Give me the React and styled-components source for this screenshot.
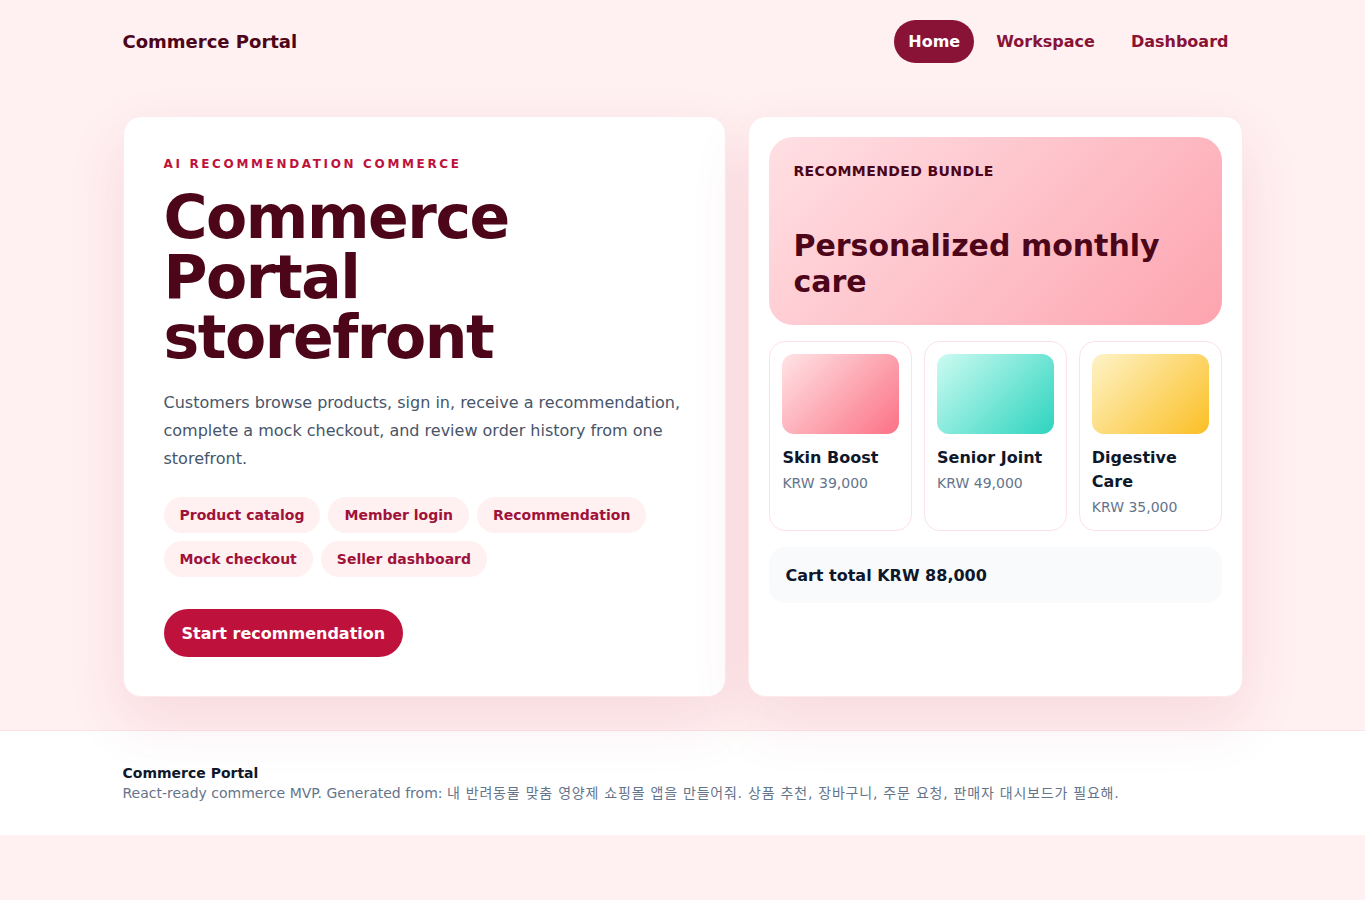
import styled, { createGlobalStyle } from 'styled-components';

const GlobalStyle = createGlobalStyle`
  body {
    margin: 0;
    background: #fff0f1;
    font-family: "DejaVu Sans", "Noto Sans CJK KR", sans-serif;
    color: #0f172a;
  }
  * {
    box-sizing: border-box;
  }
`;

const Container = styled.div`
  max-width: 1120px;
  margin: 0 auto;
`;

const Header = styled(Container)`
  display: flex;
  align-items: center;
  justify-content: space-between;
  padding: 20px 0;
`;

const Brand = styled.div`
  font-size: 18px;
  font-weight: 700;
  color: #4c0519;
`;

const Nav = styled.nav`
  display: flex;
  gap: 8px;
`;

const NavLink = styled.a`
  padding: 10px 14px;
  border-radius: 999px;
  font-size: 16px;
  font-weight: 700;
  line-height: 23px;
  text-decoration: none;
  color: ${(p) => (p.$active ? '#ffffff' : '#881337')};
  background: ${(p) => (p.$active ? '#881337' : 'transparent')};
`;

const Main = styled(Container)`
  display: grid;
  grid-template-columns: 1.1fr 0.9fr;
  gap: 22px;
  padding: 33px 0 33px;
`;

const Card = styled.section`
  background: #ffffff;
  border: 1px solid #fdeaed;
  border-radius: 18px;
  box-shadow: 0 24px 60px rgba(190, 18, 60, 0.1);
  padding: ${(p) => p.$pad};
`;

const Eyebrow = styled.div`
  font-size: 12px;
  font-weight: 700;
  letter-spacing: 2.65px;
  color: #be123c;
  line-height: 14px;
`;

const Title = styled.h1`
  margin: 16px 0 0;
  font-size: 60px;
  line-height: 60px;
  font-weight: 700;
  letter-spacing: -0.024em;
  color: #4c0519;
`;

const Lead = styled.p`
  margin: 22px 0 0;
  font-size: 16px;
  line-height: 28px;
  color: #475569;
`;

const Chips = styled.div`
  display: flex;
  flex-wrap: wrap;
  gap: 8px;
  margin-top: 24px;
`;

const Chip = styled.span`
  padding: 0 16px;
  height: 36px;
  display: inline-flex;
  align-items: center;
  border-radius: 999px;
  background: #fff0f1;
  color: #9f1239;
  font-size: 14px;
  font-weight: 700;
`;

const PrimaryButton = styled.button`
  margin-top: 32px;
  height: 48px;
  padding: 0 18px;
  border: none;
  border-radius: 999px;
  background: #be123c;
  color: #ffffff;
  font-family: inherit;
  font-size: 16px;
  font-weight: 700;
`;

const Bundle = styled.div`
  border-radius: 24px;
  padding: 24px 24px 25px;
  background: linear-gradient(135deg, #ffe0e4 0%, #fda4af 100%);
`;

const BundleLabel = styled.div`
  font-size: 14px;
  font-weight: 700;
  letter-spacing: 0.4px;
  line-height: 20px;
  color: #4c0519;
`;

const BundleTitle = styled.h2`
  margin: 47px 0 0;
  font-size: 30px;
  line-height: 36px;
  font-weight: 700;
  color: #4c0519;
`;

const Products = styled.div`
  display: grid;
  grid-template-columns: repeat(3, 1fr);
  gap: 12px;
  margin-top: 16px;
`;

const Product = styled.div`
  border: 1px solid #fde2e6;
  border-radius: 16px;
  padding: 12px 12px 13px;
`;

const Thumb = styled.div`
  height: 80px;
  border-radius: 12px;
  background: linear-gradient(135deg, ${(p) => p.$from} 0%, ${(p) => p.$to} 100%);
`;

const ProductName = styled.div`
  margin-top: 12px;
  font-size: 16px;
  line-height: 24px;
  font-weight: 700;
  color: #0f172a;
`;

const Price = styled.div`
  margin-top: 3px;
  font-size: 14px;
  line-height: 20px;
  color: #64748b;
`;

const CartTotal = styled.div`
  margin-top: 16px;
  padding: 0 16px;
  height: 56px;
  display: flex;
  align-items: center;
  border-radius: 16px;
  background: #f8fafc;
  font-size: 16px;
  font-weight: 700;
  color: #0f172a;
`;

const Footer = styled.footer`
  background: #ffffff;
  border-top: 1px solid #fde2e6;
  padding: 32px 0;
`;

const FooterTitle = styled.div`
  font-size: 14px;
  font-weight: 700;
  line-height: 20px;
  color: #0f172a;
`;

const FooterText = styled.div`
  font-size: 14px;
  line-height: 20px;
  color: #64748b;
`;

const Prompt = styled.span`
  letter-spacing: 0.77px;
`;

const chips = ['Product catalog', 'Member login', 'Recommendation', 'Mock checkout', 'Seller dashboard'];

const products = [
  { name: 'Skin Boost', price: 'KRW 39,000', from: '#ffe4e6', to: '#fb7185' },
  { name: 'Senior Joint', price: 'KRW 49,000', from: '#ccfbf1', to: '#2dd4bf' },
  { name: 'Digestive Care', price: 'KRW 35,000', from: '#fef3c7', to: '#fbbf24' },
];

export default function App() {
  return (
    <>
      <GlobalStyle />
      <Header as="header">
        <Brand>Commerce Portal</Brand>
        <Nav>
          <NavLink $active>Home</NavLink>
          <NavLink>Workspace</NavLink>
          <NavLink>Dashboard</NavLink>
        </Nav>
      </Header>
      <Main as="main">
        <Card $pad="40px 40px 39px">
          <Eyebrow>AI RECOMMENDATION COMMERCE</Eyebrow>
          <Title>
            Commerce
            <br />
            Portal
            <br />
            storefront
          </Title>
          <Lead>
            Customers browse products, sign in, receive a recommendation, complete a mock checkout, and review order
            history from one storefront.
          </Lead>
          <Chips>
            {chips.map((c) => (
              <Chip key={c}>{c}</Chip>
            ))}
          </Chips>
          <PrimaryButton>Start recommendation</PrimaryButton>
        </Card>
        <Card $pad="20px">
          <Bundle>
            <BundleLabel>RECOMMENDED BUNDLE</BundleLabel>
            <BundleTitle>Personalized monthly care</BundleTitle>
          </Bundle>
          <Products>
            {products.map((p) => (
              <Product key={p.name}>
                <Thumb $from={p.from} $to={p.to} />
                <ProductName>{p.name}</ProductName>
                <Price>{p.price}</Price>
              </Product>
            ))}
          </Products>
          <CartTotal>Cart total KRW 88,000</CartTotal>
        </Card>
      </Main>
      <Footer>
        <Container>
          <FooterTitle>Commerce Portal</FooterTitle>
          <FooterText>
            React-ready commerce MVP. Generated from:{' '}
            <Prompt>내 반려동물 맞춤 영양제 쇼핑몰 앱을 만들어줘. 상품 추천, 장바구니, 주문 요청, 판매자 대시보드가 필요해.</Prompt>
          </FooterText>
        </Container>
      </Footer>
    </>
  );
}
